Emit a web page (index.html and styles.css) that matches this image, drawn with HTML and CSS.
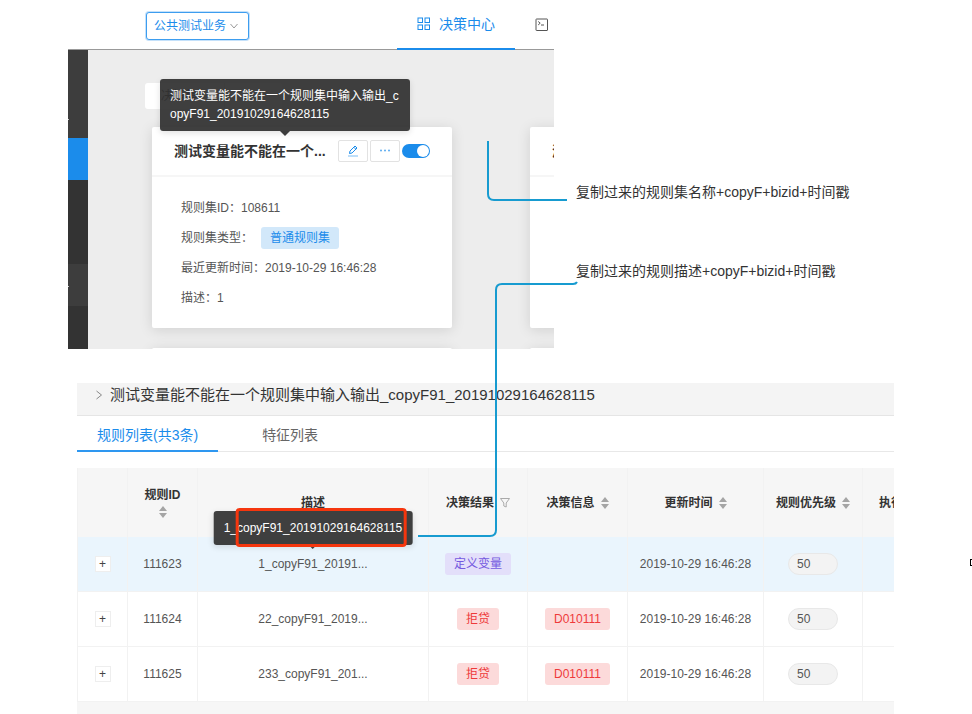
FILE: index.html
```html
<!DOCTYPE html>
<html lang="zh-CN">
  <head>
    <meta charset="utf-8">
    <meta name="viewport" content="width=device-width,initial-scale=1">
    <title>规则集复制</title>
    <link rel="stylesheet" href="styles.css">
  </head>

  <body>
    <main class="board">
      <div class="top">
        <section class="app">
          <header class="app-header">
            <button class="biz" type="button">公共测试业务
              <svg width="8" height="8" viewBox="0 0 8 8"><path d="M.5 2l3.500 4L7.500 2" fill="none" stroke="#999"/></svg>
            </button>
            <nav class="nav">
              <a class="nav-item active" href="#">
                <svg width="14" height="14" viewBox="0 0 14 14" fill="none" stroke="currentColor">
                  <rect x="1" y="1" width="4.500" height="4.500"/><rect x="8" y="1" width="4.500" height="4.500"/>
                  <rect x="1" y="8" width="4.500" height="4.500"/><rect x="8" y="8" width="4.500" height="4.500"/>
                </svg>
                决策中心
              </a>
              <a class="nav-item" href="#" aria-label="控制台">
                <svg width="14" height="14" viewBox="0 0 14 14" fill="none" stroke="currentColor">
                  <rect x="1" y="1" width="11.500" height="11.500" rx=".5"/><path d="M3.200 3.500l2 1.700-2 1.700M6 7h3"/>
                </svg>
              </a>
            </nav>
          </header>
          <div class="app-body">
            <aside class="side">
              <a class="side-group tall" href="#" aria-label="菜单"><svg width="8" height="6" viewBox="0 0 8 6"><path d="M1 5l3-3 3 3" fill="none" stroke="#ccc"/></svg></a>
              <a class="side-link current" href="#" aria-label="当前菜单"></a>
              <a class="side-link" href="#" aria-label="菜单"></a>
              <a class="side-link" href="#" aria-label="菜单"></a>
              <a class="side-group" href="#" aria-label="菜单"><svg width="8" height="6" viewBox="0 0 8 6"><path d="M1 5l3-3 3 3" fill="none" stroke="#ccc"/></svg></a>
            </aside>
            <div class="content">
              <div class="switcher">
                <button type="button">决策集</button><button type="button" aria-label="变量"></button>
              </div>
              <div class="cards">
                <article class="card">
                  <div class="card-head">
                    <h2>测试变量能不能在一个...</h2>
                    <div class="tools">
                      <button class="tool" type="button" aria-label="编辑">
                        <svg width="12" height="12" viewBox="0 0 12 12" fill="none" stroke="#1b8ceb"><path d="M2.500 8.500l.5-2.500L8 1l2 2-5 5z"/><path d="M6.800 2.200l2 2"/><path d="M1 11h10" stroke="#7dbdf3"/></svg>
                      </button>
                      <button class="tool" type="button" aria-label="更多">
                        <svg width="12" height="12" viewBox="0 0 12 12" fill="#5aabf0"><circle cx="2" cy="5.500" r="1"/><circle cx="6" cy="5.500" r="1"/><circle cx="10" cy="5.500" r="1"/></svg>
                      </button>
                      <input class="switch" type="checkbox" aria-label="启用" checked>
                    </div>
                  </div>
                  <div class="card-body">
                    <p>规则集ID：108611</p>
                    <p>规则集类型：<span class="tag blue">普通规则集</span></p>
                    <p>最近更新时间：2019-10-29 16:46:28</p>
                    <p>描述：1</p>
                  </div>
                  <div class="tooltip title-tip" role="tooltip">测试变量能不能在一个规则集中输入输出_copyF91_20191029164628115</div>
                </article>
                <article class="card">
                  <div class="card-head"><h2>测试变量</h2></div>
                </article>
                <article class="card"></article>
                <article class="card"></article>
              </div>
            </div>
          </div>
        </section>
        <div class="notes">
          <p>复制过来的规则集名称+copyF+bizid+时间戳</p>
          <p>复制过来的规则描述+copyF+bizid+时间戳</p>
        </div>
      </div>

      <section class="detail">
        <h1 class="detail-title">
          <svg width="8" height="10" viewBox="0 0 8 10"><path d="M1.500 1l5 4-5 4" fill="none" stroke="#888"/></svg>
          测试变量能不能在一个规则集中输入输出_copyF91_20191029164628115
        </h1>
        <nav class="tabs">
          <a class="tab active" href="#">规则列表(共3条)</a>
          <a class="tab" href="#">特征列表</a>
        </nav>
        <table class="rules">
          <colgroup>
            <col class="c-expand"><col class="c-id"><col><col class="c-result"><col class="c-info"><col class="c-time"><col class="c-level"><col class="c-more">
          </colgroup>
          <thead>
            <tr>
              <th></th>
              <th><span class="stack">规则ID<svg class="sort" width="8" height="12" viewBox="0 0 8 12"><path d="M0 5l4-5 4 5zM0 7l4 5 4-5z"/></svg></span></th>
              <th>描述</th>
              <th><span class="label">决策结果<svg width="10" height="10" viewBox="0 0 10 10"><path d="M.5.5h9L6.200 5v4L3.800 8V5z" fill="none" stroke="#aaa"/></svg></span></th>
              <th><span class="label">决策信息<svg class="sort" width="8" height="12" viewBox="0 0 8 12"><path d="M0 5l4-5 4 5zM0 7l4 5 4-5z"/></svg></span></th>
              <th><span class="label">更新时间<svg class="sort" width="8" height="12" viewBox="0 0 8 12"><path d="M0 5l4-5 4 5zM0 7l4 5 4-5z"/></svg></span></th>
              <th><span class="label">规则优先级<svg class="sort" width="8" height="12" viewBox="0 0 8 12"><path d="M0 5l4-5 4 5zM0 7l4 5 4-5z"/></svg></span></th>
              <th class="cut">执行</th>
            </tr>
          </thead>
          <tbody>
            <tr class="hover">
              <td><button class="expand" type="button" aria-label="展开">+</button></td>
              <td>111623</td>
              <td>
                <span class="desc">1_copyF91_20191...
                  <span class="tooltip desc-tip" role="tooltip">1_copyF91_20191029164628115<i class="mark"></i></span>
                </span>
              </td>
              <td><span class="tag purple">定义变量</span></td>
              <td></td>
              <td>2019-10-29 16:46:28</td>
              <td><input class="level" type="text" value="50" aria-label="规则优先级"></td>
              <td></td>
            </tr>
            <tr>
              <td><button class="expand" type="button" aria-label="展开">+</button></td>
              <td>111624</td>
              <td>22_copyF91_2019...</td>
              <td><span class="tag red">拒贷</span></td>
              <td><span class="tag red">D010111</span></td>
              <td>2019-10-29 16:46:28</td>
              <td><input class="level" type="text" value="50" aria-label="规则优先级"></td>
              <td></td>
            </tr>
            <tr>
              <td><button class="expand" type="button" aria-label="展开">+</button></td>
              <td>111625</td>
              <td>233_copyF91_201...</td>
              <td><span class="tag red">拒贷</span></td>
              <td><span class="tag red">D010111</span></td>
              <td>2019-10-29 16:46:28</td>
              <td><input class="level" type="text" value="50" aria-label="规则优先级"></td>
              <td></td>
            </tr>
          </tbody>
        </table>
      </section>

      <!-- connectors from the notes to the copied names -->
      <svg class="links" fill="none" stroke="#179bd0" stroke-width="2">
        <path d="M488 141V194q0 6 6 6H567"/>
        <path d="M418 536H490q6 0 6-6V290q0-6 6-6H573q3 0 4-2"/>
      </svg>
      <span class="handle"></span>
    </main>
  </body>
</html>
```
FILE: styles.css
```css
/* reset/general */
* { box-sizing: border-box; }
body { margin: 0; background: #fff; color: #555; font: 12px/18px "Liberation Sans", "Noto Sans CJK SC", sans-serif; }
h1, h2, p { margin: 0; font-weight: normal; }
a { color: inherit; text-decoration: none; }
button, input { margin: 0; font: inherit; }
button { padding: 0; cursor: pointer; }
svg { flex: none; }

.board { position: relative; overflow: hidden; }
.top { display: flex; padding-left: 68px; }

/* app window */
.app { flex: 0 0 50vw; overflow: hidden; }
.app-header { display: flex; justify-content: space-between; height: 50px; padding-left: 78px; border-bottom: 1px solid #999; }
.biz { display: flex; align-items: center; align-self: flex-start; gap: 4px; height: 28px; margin-top: 12px; padding: 0 10px 0 7px; color: #1b8ceb; background: #fff; border: 1px solid #3d9def; border-radius: 3px; box-shadow: 0 0 0 1px #c5e1fa; }
.nav { display: flex; }
.nav-item { display: flex; align-items: center; gap: 8px; height: 50px; padding: 0 5px 0 20px; font-size: 14px; color: #555; }
.nav-item.active { padding-right: 20px; color: #1b8ceb; border-bottom: 2px solid #1b8ceb; }
.app-body { display: flex; height: 299px; }

.side { flex: 0 0 20px; background: #333; overflow: hidden; }
.side-link, .side-group { display: flex; height: 42px; }
.side-link.current { background: #1b8ceb; }
.side-group { align-items: center; background: #3d3d3d; }
.side-group svg { margin-left: -6px; }
.side-group.tall { height: 88px; padding-top: 48px; }

.content { flex: 1; min-width: 0; padding: 33px 0 0 57px; background: #ededed; overflow: hidden; }
.switcher { display: flex; height: 26px; }
.switcher button { width: 80px; padding-left: 16px; text-align: left; color: #333; background: #fff; border: 0; border-right: 1px solid #ddd; border-radius: 3px 0 0 3px; }
.switcher button + button { width: 57px; border-right: 0; border-radius: 0 3px 3px 0; }

.cards { display: grid; grid-template-columns: 300px 300px; gap: 20px 78px; margin: 18px 0 0 7px; }
.card { position: relative; height: 201px; background: #fff; border-radius: 2px; box-shadow: 0 2px 14px rgba(0, 0, 0, .12); }
.card-head { display: flex; align-items: center; justify-content: space-between; height: 50px; padding: 0 22px; border-bottom: 2px solid #f6f6f6; }
.card-head h2 { font-size: 14px; font-weight: bold; color: #333; }
.tools { display: flex; align-items: center; gap: 2px; }
.tool { display: flex; align-items: center; justify-content: center; width: 30px; height: 22px; background: #fff; border: 1px solid #e2e2e2; border-radius: 2px; }
.switch { appearance: none; width: 28px; height: 14px; padding: 1px; background: #1b8ceb; border-radius: 7px; }
.switch::before { content: ""; display: block; width: 12px; height: 12px; margin-left: auto; background: #fff; border-radius: 50%; }
.card-body { display: flex; flex-direction: column; gap: 8px; padding: 20px 29px; }
.card-body p { line-height: 22px; }
.card-body .tag { margin-left: 8px; }

/* tags */
.tag { display: inline-block; height: 22px; padding: 0 9px; line-height: 22px; border-radius: 3px; }
.tag.blue { color: #1b8ceb; background: #d2e8fa; }
.tag.purple { color: #7459e0; background: #e3dffa; }
.tag.red { color: #ee3a3a; background: #fcdada; }

/* tooltips */
.tooltip { position: absolute; z-index: 1; padding: 8px 10px; color: #fff; background: rgba(48, 48, 48, .93); border-radius: 3px; box-shadow: 0 2px 6px rgba(0, 0, 0, .12); }
.tooltip::after { content: ""; position: absolute; top: 100%; left: 50%; margin-left: -5px; border: 5px solid transparent; border-top-color: #3c3c3c; border-bottom: 0; }
.title-tip { left: 8px; bottom: 197px; width: 250px; word-break: break-all; }
.desc-tip { left: 50%; bottom: 26px; transform: translateX(-50%); white-space: nowrap; }
.desc-tip::after { margin-top: -1px; }
.mark { position: absolute; top: -3px; right: 6px; bottom: -2px; left: 22px; border: 3px solid #f5360e; border-radius: 4px; z-index: 1; }

/* notes */
.notes { display: flex; flex-direction: column; gap: 59px; padding: 182px 0 0 22px; font-size: 14px; line-height: 20px; color: #333; white-space: nowrap; }

/* rule list */
.detail { margin: 34px 78px 0 77px; }
.detail-title { display: flex; gap: 7px; align-items: center; height: 33px; padding: 0 0 8px 18px; font-size: 15px; color: #333; background: #f4f4f4; border-bottom: 1px solid #e5e5e5; white-space: nowrap; }
.tabs { display: flex; gap: 24px; height: 36px; border-bottom: 1px solid #e8e8e8; }
.tab { height: 36px; padding: 0 20px; font-size: 14px; line-height: 38px; color: #666; }
.tab.active { color: #1b8ceb; border-bottom: 2px solid #2e97f0; }

.rules { width: 100%; margin-top: 16px; table-layout: fixed; border-spacing: 0; text-align: center; border-bottom: 12px solid #f6f6f6; }
.c-expand { width: 51px; }
.c-id { width: 70px; }
.c-result, .c-level { width: 99px; }
.c-info { width: 100px; }
.c-time { width: 136px; }
.c-more { width: 31px; }
.rules th, .rules td { padding: 0; border-right: 1px solid #f2f2f2; white-space: nowrap; }
.rules th:first-child, .rules td:first-child { border-left: 1px solid #f2f2f2; }
.rules th:last-child, .rules td:last-child { border-right: 0; }
.rules th { height: 69px; color: #333; background: #f6f6f6; }
.rules td { height: 55px; border-bottom: 1px solid #f2f2f2; }
.rules .hover td { background: #eaf5fd; }
.rules th.cut { padding-left: 16px; text-align: left; overflow: hidden; text-overflow: clip; }
.label { display: inline-flex; align-items: center; gap: 6px; }
.stack { display: flex; flex-direction: column; align-items: center; gap: 2px; padding-bottom: 2px; }
.sort { fill: #a5a5a5; }
.desc { position: relative; }
.expand { display: block; width: 16px; height: 16px; margin: 0 auto; line-height: 14px; color: #444; background: #fff; border: 1px solid #eee; }
.level { width: 50px; height: 22px; padding: 0 8px; color: #555; background: #f3f3f3; border: 1px solid #e8e8e8; border-radius: 11px; }

/* overlay */
.links { position: absolute; top: 0; left: 0; width: 100%; height: 100%; z-index: 2; pointer-events: none; }
.handle { position: absolute; top: 559px; right: -5px; width: 7px; height: 7px; border: 1px solid #000; }
```
